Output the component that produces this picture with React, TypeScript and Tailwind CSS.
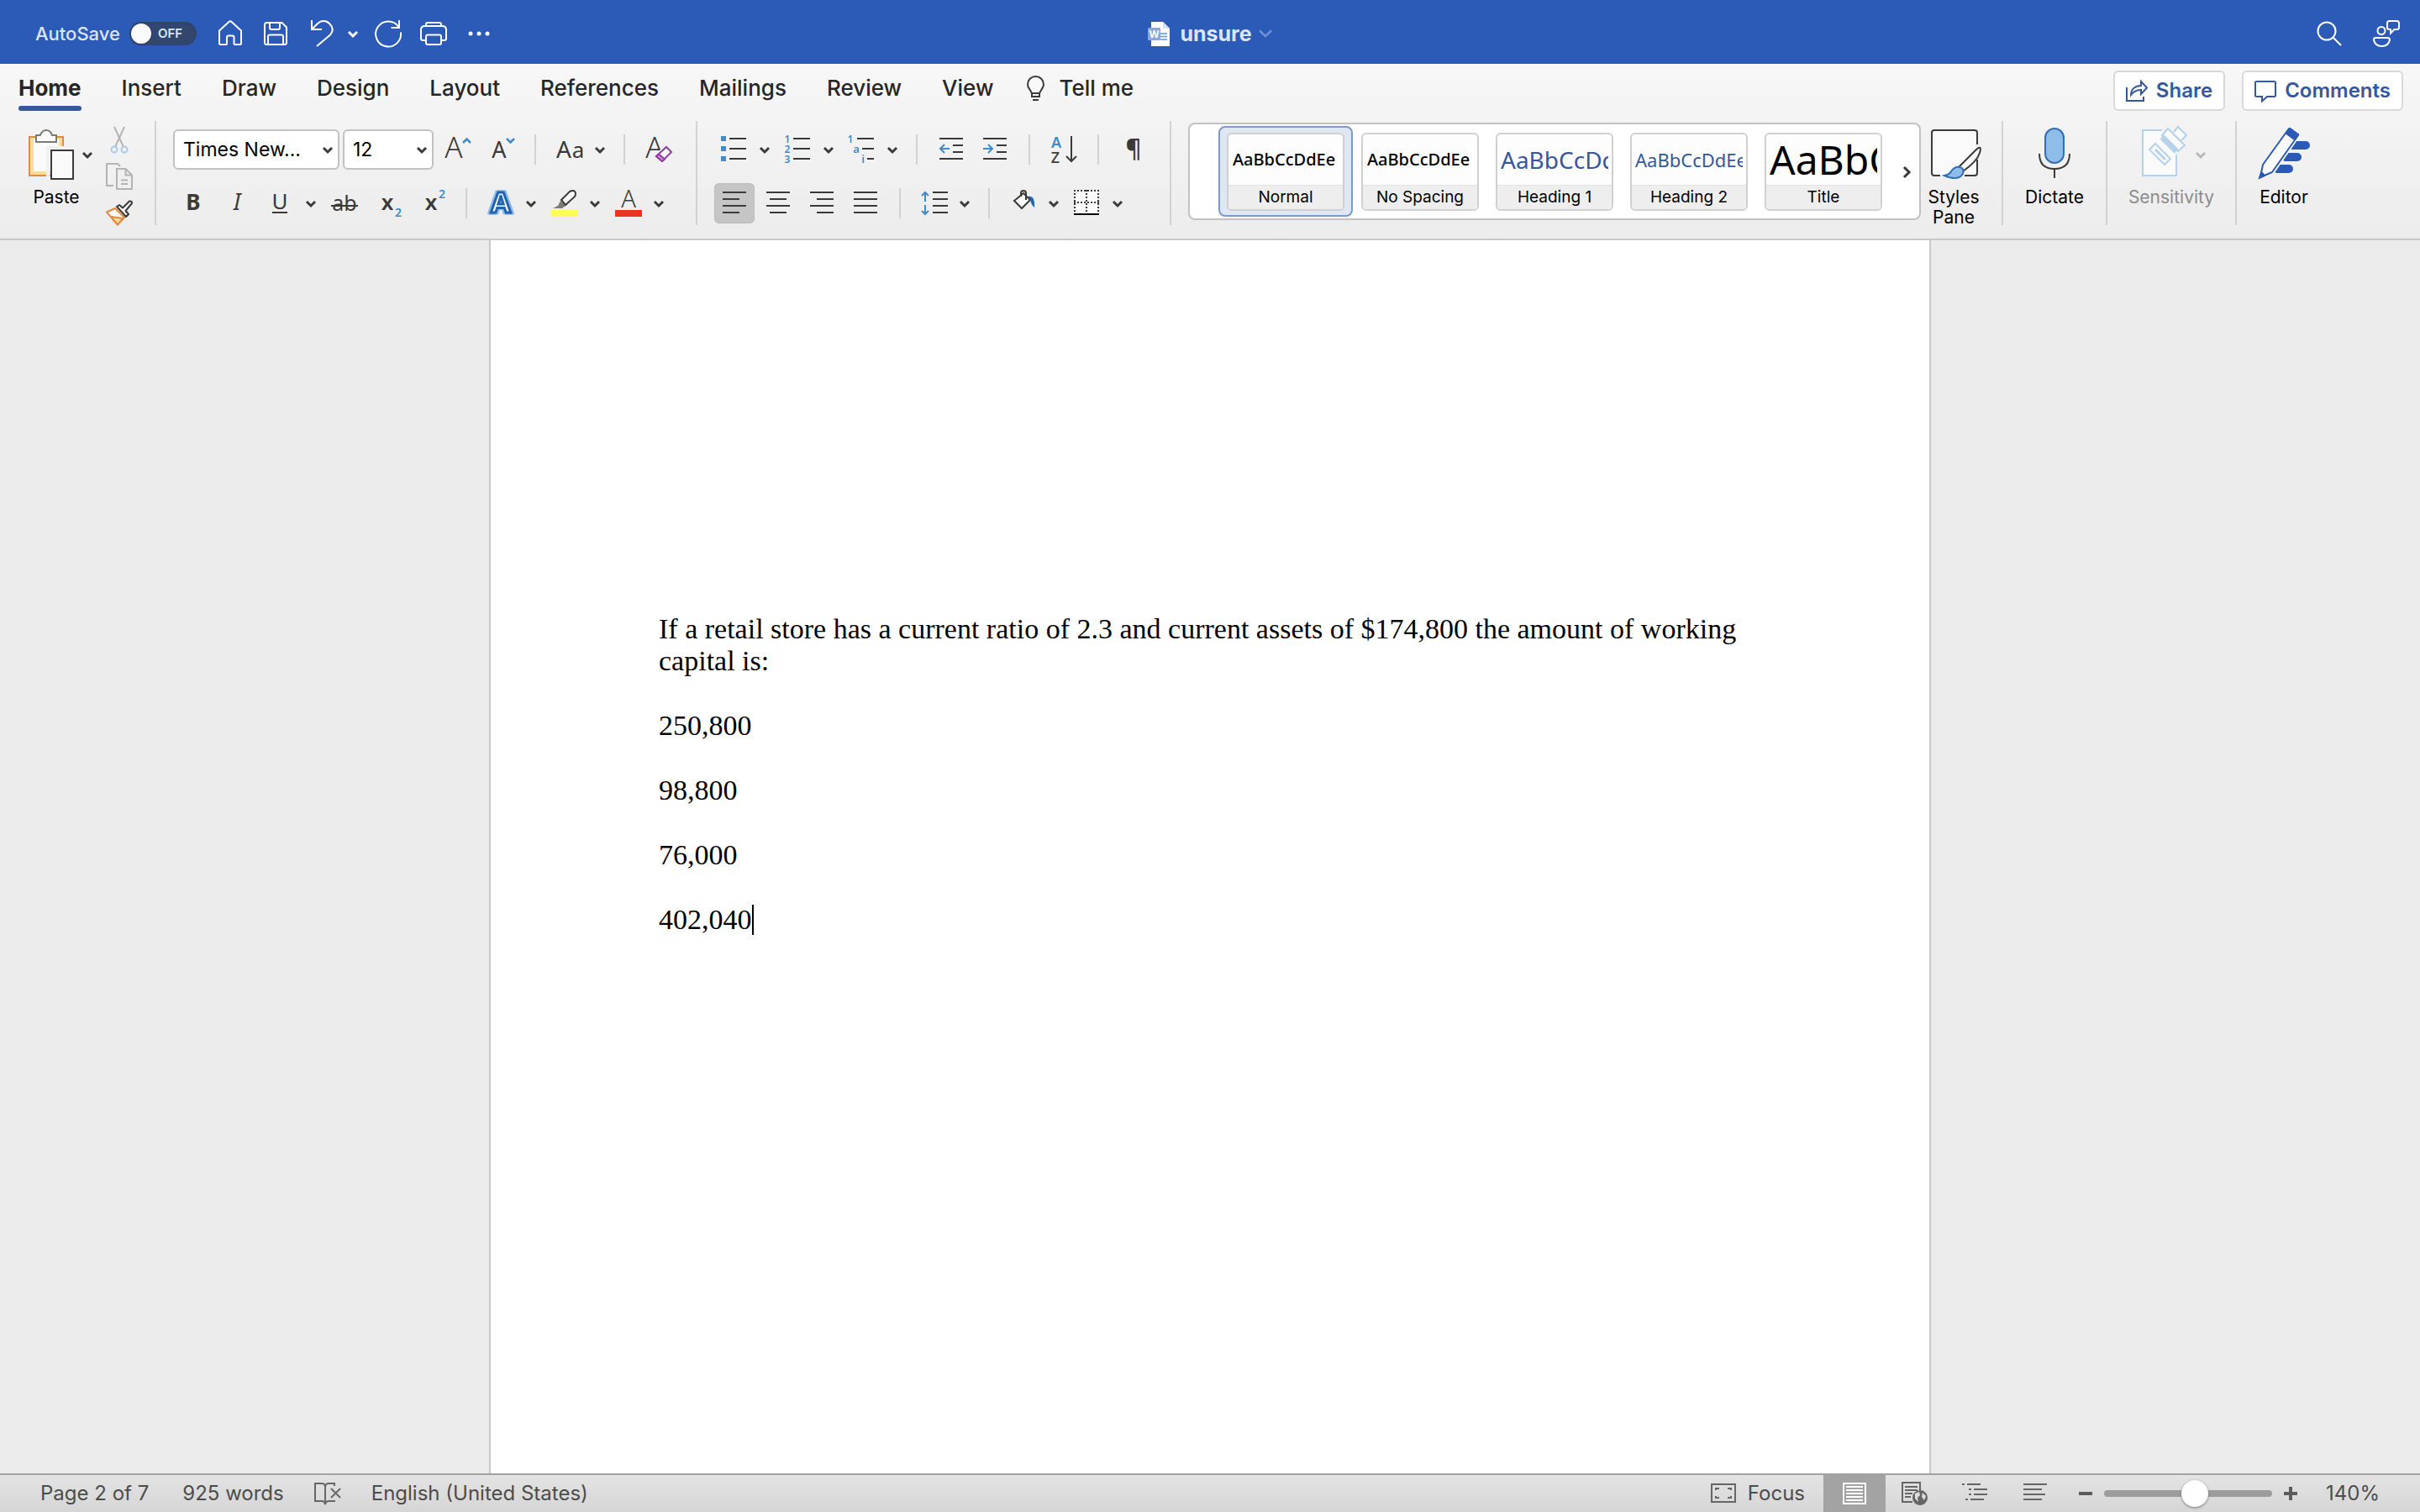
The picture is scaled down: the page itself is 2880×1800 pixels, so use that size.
import React, { useState } from "react";

const INK = "#3b3a38";
const BLUE = "#3f8bcb";
const ICON_FONT = "'Noto Sans', 'Open Sans', sans-serif";

type IconProps = { w?: number; h?: number; children: React.ReactNode; className?: string };

function Icon({ w = 32, h = 32, children, className }: IconProps) {
  return (
    <svg
      width={w}
      height={h}
      viewBox={`0 0 ${w} ${h}`}
      fill="none"
      stroke={INK}
      strokeWidth={2}
      aria-hidden="true"
      className={`shrink-0 overflow-visible ${className ?? ""}`}
    >
      {children}
    </svg>
  );
}

function Glyph({ x, y, size, fill = INK, weight = 400, italic, children }: {
  x: number; y: number; size: number; fill?: string; weight?: number; italic?: boolean; children: string;
}) {
  return (
    <text x={x} y={y} fontSize={size} fill={fill} stroke="none" fontWeight={weight}
      fontStyle={italic ? "italic" : "normal"} fontFamily={ICON_FONT} textAnchor="middle">
      {children}
    </text>
  );
}

function Chevron({ color = INK }: { color?: string }) {
  return (
    <Icon w={12} h={12}>
      <path d="M1 4l5 5 5-5" stroke={color} strokeWidth={3} />
    </Icon>
  );
}

function Btn({ label, className, children }: { label: string; className?: string; children: React.ReactNode }) {
  return (
    <button type="button" aria-label={label} title={label} className={`flex shrink-0 items-center justify-center ${className ?? ""}`}>
      {children}
    </button>
  );
}

function Divider({ className }: { className?: string }) {
  return <div className={`w-0.5 shrink-0 self-stretch bg-[#d2d2d2] ${className ?? ""}`} />;
}

function SmallDivider({ className }: { className?: string }) {
  return <div className={`h-9 w-0.5 shrink-0 bg-[#d2d2d2] ${className ?? ""}`} />;
}

/* ---------- Title bar ---------- */

function TitleBar() {
  const [autoSave, setAutoSave] = useState(false);
  return (
    <header className="grid h-[76px] grid-cols-[1fr_auto_1fr] items-center bg-[#2b5bb7] pt-1 text-[#dbe5f7]">
      <div className="flex items-center pl-[42px]">
        <label className="flex items-center gap-3">
          <span className="w-[100px] text-[22px] leading-7 font-medium whitespace-nowrap">AutoSave</span>
          <input type="checkbox" role="switch" className="sr-only" checked={autoSave} onChange={() => setAutoSave(!autoSave)} />
          <span className="flex h-7 w-20 items-center gap-2 rounded-full bg-[#33466d] p-0.5 shadow-inner">
            <span className="h-6 w-6 rounded-full bg-[#fafafa] shadow" />
            <span className="text-[15px] font-semibold">{autoSave ? "ON" : "OFF"}</span>
          </span>
        </label>
        <Btn label="Home" className="ml-6">
          <Icon>
            <path stroke="#fff" strokeLinejoin="round" d="M3 12.5 15 1.6q1-.8 2 0L29 12.5V27.500q0 1.500-1.500 1.500H21.500q-1 0-1-1V20.500q0-2-2-2h-4.500q-2 0-2 2V28q0 1-1 1H4.500Q3 29 3 27.500z" />
          </Icon>
        </Btn>
        <Btn label="Save" className="ml-[22px]">
          <Icon>
            <path stroke="#fff" d="M5.500 3H23.500L29 8.500V26.500Q29 29 26.500 29H5.500Q3 29 3 26.500V5.500Q3 3 5.500 3zM9 3v6q0 2 2 2h8q2 0 2-2V3M7 29V19.500q0-2 2-2H23q2 0 2 2V29" />
          </Icon>
        </Btn>
        <Btn label="Undo" className="ml-6">
          <Icon>
            <path stroke="#fff" d="M3 0V11H15M3 11 9.500 4.500C14 0 20 0 24 4S29 13 25 17.500L9 31" />
          </Icon>
        </Btn>
        <Btn label="Undo options" className="ml-3.5"><Chevron color="#fff" /></Btn>
        <Btn label="Redo" className="ml-5">
          <Icon>
            <path stroke="#fff" d="M29 0V9H19.500M28.500 8A15 15 0 1 0 31 14.500" />
          </Icon>
        </Btn>
        <Btn label="Print" className="ml-[22px]">
          <Icon>
            <path stroke="#fff" d="M7 24H3.500Q1 24 1 21.500V11.500Q1 7 5.500 7H26.500Q31 7 31 11.500V21.500Q31 24 28.500 24H25M7 7V5q0-2 2-2H23q2 0 2 2V7M9 17.500H23q2 0 2 2V27q0 2-2 2H9q-2 0-2-2V19.500q0-2 2-2z" />
          </Icon>
        </Btn>
        <Btn label="More" className="ml-[22px]">
          <Icon>
            <g fill="#fff" stroke="none"><circle cx="6" cy="16" r="2.500" /><circle cx="16" cy="16" r="2.500" /><circle cx="26" cy="16" r="2.500" /></g>
          </Icon>
        </Btn>
      </div>

      <button type="button" className="flex items-center">
        <Icon w={26} h={30}>
          <path fill="#fff" stroke="none" d="M4 1H18L26 9V30H4z" />
          <path fill="#d9e0ee" stroke="none" d="M18 1V9H26z" />
          <path stroke="#5b9bd9" d="M15 15H23M15 18.500H23M15 22H23" strokeWidth={1.5} />
          <rect x="0" y="8" width="15" height="15" rx="1" fill="#8aa6dc" stroke="none" />
          <Glyph x={7.5} y={20} size={12} fill="#fff" weight={700}>W</Glyph>
        </Icon>
        <span className="ml-3 text-[25px] leading-8 font-bold">unsure</span>
        <Icon w={16} h={10} className="ml-2">
          <path d="M1 1.500 8 8l7-6.500" stroke="#6f92d6" strokeWidth={2.5} />
        </Icon>
      </button>

      <div className="flex items-center justify-end gap-9 pr-6">
        <Btn label="Search">
          <Icon>
            <g stroke="#fff"><circle cx="13" cy="13" r="10.500" /><path d="M20.500 20.500 30 30" /></g>
          </Icon>
        </Btn>
        <Btn label="Account and feedback">
          <Icon>
            <g stroke="#fff">
              <circle cx="10" cy="12.500" r="4.500" />
              <path d="M3 21H17.500Q20 21 20 23.500 18.500 31 10.500 31T1 23.500Q1 21 3 21zM19.500 1H28.500Q31 1 31 3.500V8.500Q31 11 28.500 11H25.500L21 15.500V11H19.500Q17 11 17 8.500V3.500Q17 1 19.500 1z" />
            </g>
          </Icon>
        </Btn>
      </div>
    </header>
  );
}

/* ---------- Tabs ---------- */

const TABS = ["Insert", "Draw", "Design", "Layout", "References", "Mailings", "Review", "View"];

function TabRow() {
  return (
    <div className="flex items-start justify-between px-5 pt-2">
      <nav className="ml-0.5 flex gap-12 text-[26px] leading-[42px] font-medium text-[#262626]">
        <button type="button" aria-current="page" className="font-bold">
          Home
          <span className="block h-1.5 rounded-full bg-[#35579b]" />
        </button>
        {TABS.map((t) => (
          <button key={t} type="button" className="self-start">{t}</button>
        ))}
        <button type="button" className="-ml-2.5 flex items-center gap-4 self-start">
          <Icon w={24} h={32}>
            <path fill="#fafafa" d="M8 26V23C8 19 3 17 3 11.500A9.500 9.500 0 0 1 22 11.500C22 17 17 19 17 23V26zM8 22H17M9 30H16" />
          </Icon>
          Tell me
        </button>
      </nav>
      <div className="flex gap-5 text-[24px] font-semibold text-[#35579b]">
        <button type="button" className="flex h-12 items-center gap-2.5 rounded-md border-2 border-[#d8d8d8] bg-white px-[13px]">
          <Icon w={26} h={26}>
            <path stroke="#35579b" d="M1 9V25H21V20M6 18C6 11 11 7 18 7V2l7 7.500L18 17V12C13 12 9 14 6 18z" />
          </Icon>
          Share
        </button>
        <button type="button" className="flex h-12 items-center gap-2.5 rounded-md border-2 border-[#d8d8d8] bg-white px-[13px]">
          <Icon w={26} h={26}>
            <path stroke="#35579b" d="M2.500 2H23.500Q25 2 25 3.500V18.500Q25 20 23.500 20H15L9 25.500V20H2.500Q1 20 1 18.500V3.500Q1 2 2.500 2z" />
          </Icon>
          Comments
        </button>
      </div>
    </div>
  );
}

/* ---------- Ribbon groups ---------- */

function ClipboardGroup() {
  return (
    <>
      <button type="button" className="ml-6 flex w-[86px] flex-col gap-[9px] pt-2.5 text-[21px] leading-6">
        <span className="flex items-center justify-end gap-2.5 self-end">
          <Icon w={54} h={60}>
            <rect x="1" y="9" width="40" height="46" fill="#f8dc9a" stroke="#e18b41" />
            <rect x="6" y="12" width="30" height="38" fill="#fafafa" stroke="none" />
            <path d="M9 7H14Q16 1 21 1T28 7H33V15H9z" fill="#fafafa" stroke="#7b7a75" />
            <path d="M23 60V22H44" stroke="#f1f1f1" strokeWidth={4} />
            <rect x="27" y="25" width="26" height="34" fill="#fafafa" />
          </Icon>
          <Chevron />
        </span>
        <span className="w-full text-center">Paste</span>
      </button>
      <div className="ml-4 flex w-8 flex-col gap-3 pt-1.5">
        <Btn label="Cut">
          <Icon>
            <path stroke="#b4b4b4" d="M10 1 21 25M22 1 11 25" />
            <g stroke="#a8cbe8"><circle cx="10" cy="28" r="3.500" /><circle cx="22" cy="28" r="3.500" /></g>
          </Icon>
        </Btn>
        <Btn label="Copy">
          <Icon>
            <path stroke="#b4b4b4" d="M17 4 14 1H1V27H9M13 7H23.500L31 14.500V31H13zM23.500 7V14.500H31M18 20.500H26M18 25H26" />
          </Icon>
        </Btn>
        <Btn label="Format Painter">
          <Icon>
            <path fill="#fafafa" stroke="#e18b41" strokeLinejoin="round" d="M1 14.500 11 10 22 21 14 29.500z" />
            <path fill="#f8dc9a" stroke="#e18b41" strokeLinejoin="round" d="M6 20Q14 21 20 22L14 29.500z" />
            <path fill="#fafafa" strokeLinejoin="round" d="M13 8 16 6 20 9.500 28 1.500Q31 1 31 4L23.500 13 27 17 24 20z" />
          </Icon>
        </Btn>
      </div>
    </>
  );
}

function FontSelect({ label, value, className }: { label: string; value: string; className: string }) {
  return (
    <span className={`relative flex h-12 shrink-0 items-center ${className}`}>
      <select aria-label={label} defaultValue={value} className="h-full w-full appearance-none rounded-md border-2 border-[#c2c2c2] bg-white pl-2.5 text-[23px] text-black">
        <option>{value}</option>
      </select>
      <span className="pointer-events-none absolute right-2"><Chevron /></span>
    </span>
  );
}

function FontGroup() {
  return (
    <div className="ml-5 flex flex-col gap-4 pt-2.5">
      <div className="flex h-12 items-center">
        <FontSelect label="Font" value="Times New..." className="w-[198px]" />
        <FontSelect label="Font size" value="12" className="ml-1 w-[108px]" />
        <Btn label="Increase font size" className="ml-[13px]">
          <Icon>
            <Glyph x={11} y={26} size={35} weight={300}>A</Glyph>
            <path d="M22 8l4.500-4.500L31 8" stroke={BLUE} strokeWidth={2.5} />
          </Icon>
        </Btn>
        <Btn label="Decrease font size" className="ml-6">
          <Icon>
            <Glyph x={9} y={26} size={27}>A</Glyph>
            <path d="M18 3l4.500 4.500L27 3" stroke={BLUE} strokeWidth={2.5} />
          </Icon>
        </Btn>
        <SmallDivider className="ml-[19px]" />
        <Btn label="Change case" className="ml-6">
          <Icon w={36}>
            <Glyph x={9} y={26} size={28}>A</Glyph>
            <Glyph x={26} y={26} size={26}>a</Glyph>
          </Icon>
        </Btn>
        <Btn label="Change case options" className="ml-2.5"><Chevron /></Btn>
        <SmallDivider className="ml-[22px]" />
        <Btn label="Clear formatting" className="ml-6">
          <Icon>
            <Glyph x={11} y={26} size={35} weight={300}>A</Glyph>
            <path fill="#f2f2f2" stroke="#f2f2f2" strokeWidth={5} d="M13 24 25 13 31 19 20 30z" />
            <path fill="#fafafa" stroke="#8f3d9f" d="M13 24 25 13 31 19 20 30z" />
            <path fill="#cf9ad8" stroke="#8f3d9f" d="M13 24 16 21.500 23 27.500 20 30z" />
          </Icon>
        </Btn>
      </div>
      <div className="flex h-12 items-center">
        <Btn label="Bold" className="ml-2"><Icon><Glyph x={16} y={24} size={26} weight={700}>B</Glyph></Icon></Btn>
        <Btn label="Italic" className="ml-[21px]"><Icon><Glyph x={15} y={24} size={27} italic>I</Glyph></Icon></Btn>
        <Btn label="Underline" className="ml-[18px]">
          <Icon><Glyph x={16} y={23} size={26}>U</Glyph><path d="M7 27H25" /></Icon>
        </Btn>
        <Btn label="Underline options" className="ml-[15px]"><Chevron /></Btn>
        <Btn label="Strikethrough" className="ml-[18px]">
          <Icon><Glyph x={16} y={25} size={25}>ab</Glyph><path d="M0 19H32" /></Icon>
        </Btn>
        <Btn label="Subscript" className="ml-6"><Icon><Glyph x={11} y={24} size={26} weight={600}>x</Glyph><Glyph x={24} y={32} size={14} fill={BLUE} weight={600}>2</Glyph></Icon></Btn>
        <Btn label="Superscript" className="ml-5"><Icon><Glyph x={11} y={24} size={26} weight={600}>x</Glyph><Glyph x={24} y={10} size={14} fill={BLUE} weight={600}>2</Glyph></Icon></Btn>
        <SmallDivider className="ml-5" />
        <Btn label="Text effects" className="ml-6">
          <Icon className="[filter:drop-shadow(2px_0_0_#8fbdea)_drop-shadow(-2px_0_0_#8fbdea)_drop-shadow(0_1px_0_#8fbdea)_drop-shadow(0_-1px_0_#8fbdea)]">
            <text x="16" y="27" fontSize="34" fontWeight="700" fontFamily={ICON_FONT} textAnchor="middle" fill="#fff" stroke="#2263b0" strokeWidth="3">A</text>
          </Icon>
        </Btn>
        <Btn label="Text effects options" className="ml-3.5"><Chevron /></Btn>
        <Btn label="Highlight colour" className="ml-[18px]">
          <Icon>
            <rect x="0" y="24" width="32" height="8" fill="#fffd54" stroke="none" />
            <path d="M2 22 8 19 11 13 17 19 13 22z" fill="#7b7a75" stroke="none" />
            <path d="M12 12 22 2Q26 0 28 2T28 8L17 18z" fill="#fafafa" />
          </Icon>
        </Btn>
        <Btn label="Highlight options" className="ml-3.5"><Chevron /></Btn>
        <Btn label="Font colour" className="ml-[18px]">
          <Icon>
            <Glyph x={16} y={21} size={29} weight={300}>A</Glyph>
            <rect x="0" y="24" width="32" height="8" fill="#ea3323" stroke="none" />
          </Icon>
        </Btn>
        <Btn label="Font colour options" className="ml-3.5"><Chevron /></Btn>
      </div>
    </div>
  );
}

function ParagraphGroup() {
  return (
    <div className="ml-5 flex flex-col gap-4 pt-2.5">
      <div className="flex h-12 items-center">
        <Btn label="Bullets" className="ml-1.5">
          <Icon>
            <path d="M12 3H32M12 15H32M12 27H32" />
            <path d="M2 3H8M2 15H8M2 27H8" stroke={BLUE} strokeWidth={6} />
          </Icon>
        </Btn>
        <Btn label="Bullet options" className="ml-4"><Chevron /></Btn>
        <Btn label="Numbering" className="ml-4">
          <Icon>
            <path d="M12 3H32M12 15H32M12 27H32" />
            <Glyph x={5} y={8} size={12} fill={BLUE} weight={600}>1</Glyph>
            <Glyph x={5} y={20} size={12} fill={BLUE} weight={600}>2</Glyph>
            <Glyph x={5} y={32} size={12} fill={BLUE} weight={600}>3</Glyph>
          </Icon>
        </Btn>
        <Btn label="Numbering options" className="ml-4"><Chevron /></Btn>
        <Btn label="Multilevel list" className="ml-4">
          <Icon>
            <path d="M12 3H32M18 15H32M24 27H32" />
            <Glyph x={4} y={8} size={12} fill={BLUE} weight={600}>1</Glyph>
            <Glyph x={11} y={20} size={13} fill={BLUE} weight={600}>a</Glyph>
            <Glyph x={19} y={32} size={13} fill={BLUE} weight={600}>i</Glyph>
          </Icon>
        </Btn>
        <Btn label="Multilevel options" className="ml-4"><Chevron /></Btn>
        <SmallDivider className="ml-[22px]" />
        <Btn label="Decrease indent" className="ml-6">
          <Icon>
            <path d="M2 3H30M18 11H30M18 19H30M2 27H30" />
            <path d="M14 15H3M8 10 3 15 8 20" stroke={BLUE} />
          </Icon>
        </Btn>
        <Btn label="Increase indent" className="ml-5">
          <Icon>
            <path d="M2 3H30M18 11H30M18 19H30M2 27H30" />
            <path d="M2 15H13M8 10 13 15 8 20" stroke={BLUE} />
          </Icon>
        </Btn>
        <SmallDivider className="ml-6" />
        <Btn label="Sort" className="ml-6">
          <Icon>
            <Glyph x={7} y={14} size={18} fill={BLUE} weight={600}>A</Glyph>
            <Glyph x={6} y={32} size={18} weight={500}>Z</Glyph>
            <path d="M25 0V30M19 24 25 30 31 24" />
          </Icon>
        </Btn>
        <SmallDivider className="ml-6" />
        <Btn label="Show formatting marks" className="ml-6">
          <Icon>
            <Glyph x={17} y={25} size={29} weight={600}>¶</Glyph>
          </Icon>
        </Btn>
      </div>
      <div className="flex h-12 items-center">
        <Btn label="Align left" className="h-12 w-12 rounded-md bg-[#c5c5c5] shadow-[inset_0_0_0_1px_#bdbdbd]">
          <Icon><path d="M2 3H30M2 11H22M2 19H30M2 27H22" /></Icon>
        </Btn>
        <Btn label="Center" className="ml-3"><Icon><path d="M2 3H30M6 11H26M2 19H30M6 27H26" /></Icon></Btn>
        <Btn label="Align right" className="ml-5"><Icon><path d="M2 3H30M10 11H30M2 19H30M10 27H30" /></Icon></Btn>
        <Btn label="Justify" className="ml-5"><Icon><path d="M2 3H30M2 11H30M2 19H30M2 27H30" /></Icon></Btn>
        <SmallDivider className="ml-6" />
        <Btn label="Line spacing" className="ml-6">
          <Icon>
            <path d="M14 3H32M14 11H32M14 19H32M14 27H32" />
            <path d="M5 14V3M1 7 5 3 9 7M5 18V29M1 25 5 29 9 25" stroke={BLUE} />
          </Icon>
        </Btn>
        <Btn label="Line spacing options" className="ml-3.5"><Chevron /></Btn>
        <SmallDivider className="ml-[22px]" />
        <Btn label="Shading" className="ml-6">
          <Icon>
            <path d="M5 13 16 4 24 12 14 22z" fill="#fafafa" />
            <path d="M13 8V4Q13 1 16 1T19 4V12" />
            <path d="M21 8Q30 6 29 21 25 18 24 11z" fill="#2263b0" stroke="none" />
          </Icon>
        </Btn>
        <Btn label="Shading options" className="ml-3.5"><Chevron /></Btn>
        <Btn label="Borders" className="ml-4">
          <Icon>
            <rect x="3" y="1" width="28" height="28" fill="#fafafa" stroke="none" />
            <path d="M2 1H32M2 15H32M3 0V28M17 0V28M31 0V28" strokeDasharray="2 2" />
            <path d="M2 29H32" stroke="#000" />
          </Icon>
        </Btn>
        <Btn label="Border options" className="ml-4"><Chevron /></Btn>
      </div>
    </div>
  );
}

const STYLES = [
  { name: "Normal", sample: "AaBbCcDdEe", look: "text-[20px] text-black font-medium pl-px" },
  { name: "No Spacing", sample: "AaBbCcDdEe", look: "text-[20px] text-black font-medium pl-px" },
  { name: "Heading 1", sample: "AaBbCcDd", look: "text-[28px] text-[#35579b]" },
  { name: "Heading 2", sample: "AaBbCcDdEe", look: "text-[22px] text-[#35579b]" },
  { name: "Title", sample: "AaBbC", look: "text-[48px] text-black" },
];

function StylesGallery() {
  return (
    <div className="mt-0.5 ml-5 flex h-[116px] min-w-0 flex-1 items-start rounded-lg border-2 border-[#c2c2c2] bg-white pt-0.5 pl-[34px]">
      {STYLES.map((s, i) => (
        <button
          key={s.name}
          type="button"
          aria-pressed={i === 0}
          className={`h-[108px] w-40 shrink-0 rounded-lg border-2 px-2 pt-1.5 pb-[5px] ${i === 0 ? "border-[#7b9ac9] bg-[#dfe7f2]" : "border-transparent"}`}
        >
          <span className="flex h-full flex-col overflow-hidden rounded-md border-2 border-[#d0d0d0] bg-[#fdfdfd]">
            <span className={`mx-1 flex h-[60px] items-center overflow-hidden font-['Noto_Sans','Open_Sans',sans-serif] leading-none whitespace-nowrap ${s.look}`}>
              {s.sample}
            </span>
            <span className="flex flex-1 items-center justify-center border-t border-[#e2e2e2] bg-[#eeeeee] text-[19px] leading-6 text-black">
              {s.name}
            </span>
          </span>
        </button>
      ))}
      <Btn label="More styles" className="h-full flex-1 pl-1.5">
        <Icon w={12} h={14}><path d="M2 1l6 6-6 6" strokeWidth={3} /></Icon>
      </Btn>
    </div>
  );
}

function BigButton({ label, className, icon }: { label: string; className: string; icon: React.ReactNode }) {
  return (
    <button type="button" className={`flex shrink-0 flex-col items-center gap-[9px] pt-2.5 text-[21px] leading-6 ${className}`}>
      <span className="flex items-center gap-2.5">{icon}</span>
      <span>{label}</span>
    </button>
  );
}

function Ribbon() {
  return (
    <section className="border-b-2 border-[#c8c8c8] bg-linear-to-b from-[#f7f7f7] to-[#ececec]">
      <TabRow />
      <div className="mt-3 mb-4 flex h-[124px] items-start text-black">
        <ClipboardGroup />
        <Divider className="ml-[26px]" />
        <FontGroup />
        <Divider className="ml-7" />
        <ParagraphGroup />
        <Divider className="ml-7" />
        <StylesGallery />
        <BigButton
          label="Styles Pane"
          className="w-[78px]"
          icon={
            <Icon w={66} h={60}>
              <path fill="#fafafa" d="M17 55H10Q7 55 7 52V4Q7 1 10 1H58Q61 1 61 4V52Q61 55 58 55H46" />
              <path d="M61 18V36" stroke="#f1f1f1" strokeWidth={4} />
              <path fill="#fafafa" d="M39 45 60 24Q67 18 64 28T44 50z" />
              <path fill="#8fbdea" stroke="#2e6fb5" d="M22 55Q28 54 30 50 34 44 40 45T44 53Q38 62 22 55z" />
            </Icon>
          }
        />
        <Divider className="ml-[18px]" />
        <BigButton
          label="Dictate"
          className="w-[122px]"
          icon={
            <Icon w={40} h={60}>
              <rect x="9" y="-1" width="22" height="41" rx="11" fill="#8fbdea" stroke="#2e6fb5" />
              <path d="M2 29Q2 47 20 47T38 29M20 47V58" />
            </Icon>
          }
        />
        <Divider />
        <BigButton
          label="Sensitivity"
          className="w-[152px] text-[#8c8c8c]"
          icon={
            <>
              <Icon w={54} h={60} className="ml-1.5">
                <g stroke="#b5d2ea">
                  <path fill="#fafafa" d="M24 1H1V55H41V30" />
                  <path fill="#fafafa" d="M9 24 16 17 34 35 27 42z" />
                  <path d="M16 24 28 36" strokeWidth={3} />
                  <path fill="#fafafa" d="M24 7 31 -1 51 19 43 26zM38 3 43 -3 53 7 47 13" />
                  <path d="M24 9 41 26" strokeWidth={7} />
                </g>
              </Icon>
              <Chevron color="#b8b8b8" />
            </>
          }
        />
        <Divider />
        <BigButton
          label="Editor"
          className="mr-[106px] w-28"
          icon={
            <Icon w={60} h={60}>
              <path d="M40 19H56M32 33H46M22 47H36" stroke="#2b5bb7" strokeWidth={10} strokeLinecap="round" />
              <path d="M6 42 34 0H46L48 10 18 53 0 60z" fill="#fafafa" stroke="none" />
              <path d="M36 -1 47 7 16 51 2 57 5 42z" fill="#fafafa" stroke="#2b5bb7" strokeLinejoin="round" />
              <path d="M37 -2 48 6 43 13 32 5zM3 50 0 59 8 55z" fill="#2b5bb7" stroke="#2b5bb7" strokeWidth={1} />
            </Icon>
          }
        />
      </div>
    </section>
  );
}

/* ---------- Document ---------- */

const ANSWERS = ["250,800", "98,800", "76,000", "402,040"];

function DocumentPage() {
  return (
    <main className="flex flex-1 justify-center bg-[#ebebeb]">
      <article className="w-full max-w-[1716px] border-x-2 border-[#c8c8c8] bg-white px-50 pt-[444px] font-['Liberation_Serif','Times_New_Roman',serif] text-[34px] leading-[38px] text-black">
        <p className="max-w-[1290px]">
          If a retail store has a current ratio of 2.3 and current assets of $174,800 the amount of working capital is:
        </p>
        {ANSWERS.map((a, i) => (
          <p key={a} className="mt-[39px] flex items-center">
            {a}
            {i === ANSWERS.length - 1 && <span className="h-9 w-0.5 bg-black" />}
          </p>
        ))}
      </article>
    </main>
  );
}

/* ---------- Status bar ---------- */

const STATUS = "#666666";

function StatusBar() {
  return (
    <footer className="flex h-[46px] items-center border-t-2 border-[#a2a2a2] bg-linear-to-b from-[#e3e3e3] to-[#d6d6d6] text-[24px] whitespace-nowrap text-[#4c4c4c]">
      <button type="button" className="ml-12">Page 2 of 7</button>
      <button type="button" className="ml-10">925 words</button>
      <Btn label="Proofing" className="ml-9">
        <Icon w={32} h={28}>
          <path stroke={STATUS} d="M13 24V5Q12 2 9 2H1V23H9Q12 23 13 27 14 23 17 23H25M13 5Q14 2 17 2H24V5M20 8 31 19M31 8 20 19" />
        </Icon>
      </Btn>
      <button type="button" className="ml-9">English (United States)</button>
      <div className="ml-auto flex h-full items-center">
        <button type="button" className="flex items-center gap-3.5">
          <Icon w={30} h={24}>
            <path stroke={STATUS} d="M1 1H29V22H1zM6 8V6H10M20 6H24V8M24 15V17H20M10 17H6V15" />
          </Icon>
          Focus
        </button>
        <Btn label="Print layout" className="ml-[22px] h-full w-[74px] bg-[#a3a3a3]">
          <Icon w={28} h={28}>
            <path stroke="#fff" d="M1 2H27V26H1zM4 6H24M4 10H24M4 14H24M4 18H24M4 22H24" />
          </Icon>
        </Btn>
        <Btn label="Web layout" className="ml-[18px]">
          <Icon>
            <path stroke={STATUS} d="M14 26H2V3H23V12M5 8H20M5 12H20M5 16H14M5 20H12" />
            <circle cx="23" cy="21" r="9" fill={STATUS} stroke="none" />
            <path fill="#dedede" stroke="none" d="M17 16 22 14 23 18 20 21 21 26 17 22zM26 15 30 19 28 24 25 20z" />
          </Icon>
        </Btn>
        <Btn label="Outline" className="ml-10">
          <Icon>
            <path stroke={STATUS} d="M1 5H4M7 5H23M9 11H12M15 11H31M9 17H12M15 17H31M5 23H8M11 23H27" />
          </Icon>
        </Btn>
        <Btn label="Draft" className="ml-10">
          <Icon>
            <path stroke={STATUS} d="M2 5H30M2 11H24M2 17H28M2 23H24" />
          </Icon>
        </Btn>
        <Btn label="Zoom out" className="ml-9">
          <Icon w={16} h={16}><path stroke="#5c5c5c" strokeWidth={4} d="M0 8H16" /></Icon>
        </Btn>
        <input
          type="range"
          aria-label="Zoom"
          min={0}
          max={100}
          defaultValue={55}
          className="ml-3.5 h-8 w-[200px] appearance-none bg-transparent [&::-webkit-slider-runnable-track]:h-2 [&::-webkit-slider-runnable-track]:rounded-full [&::-webkit-slider-runnable-track]:bg-[#9c9c9c] [&::-webkit-slider-thumb]:-mt-3 [&::-webkit-slider-thumb]:h-8 [&::-webkit-slider-thumb]:w-8 [&::-webkit-slider-thumb]:appearance-none [&::-webkit-slider-thumb]:rounded-full [&::-webkit-slider-thumb]:bg-white [&::-webkit-slider-thumb]:shadow-[0_1px_3px_#777]"
        />
        <Btn label="Zoom in" className="ml-3.5">
          <Icon w={16} h={16}><path stroke="#5c5c5c" strokeWidth={4} d="M0 8H16M8 0V16" /></Icon>
        </Btn>
        <button type="button" className="mr-12 ml-[34px]">140%</button>
      </div>
    </footer>
  );
}

export default function App() {
  return (
    <div className="flex min-h-screen flex-col font-['Inter','Liberation_Sans',sans-serif]">
      <TitleBar />
      <Ribbon />
      <DocumentPage />
      <StatusBar />
    </div>
  );
}
